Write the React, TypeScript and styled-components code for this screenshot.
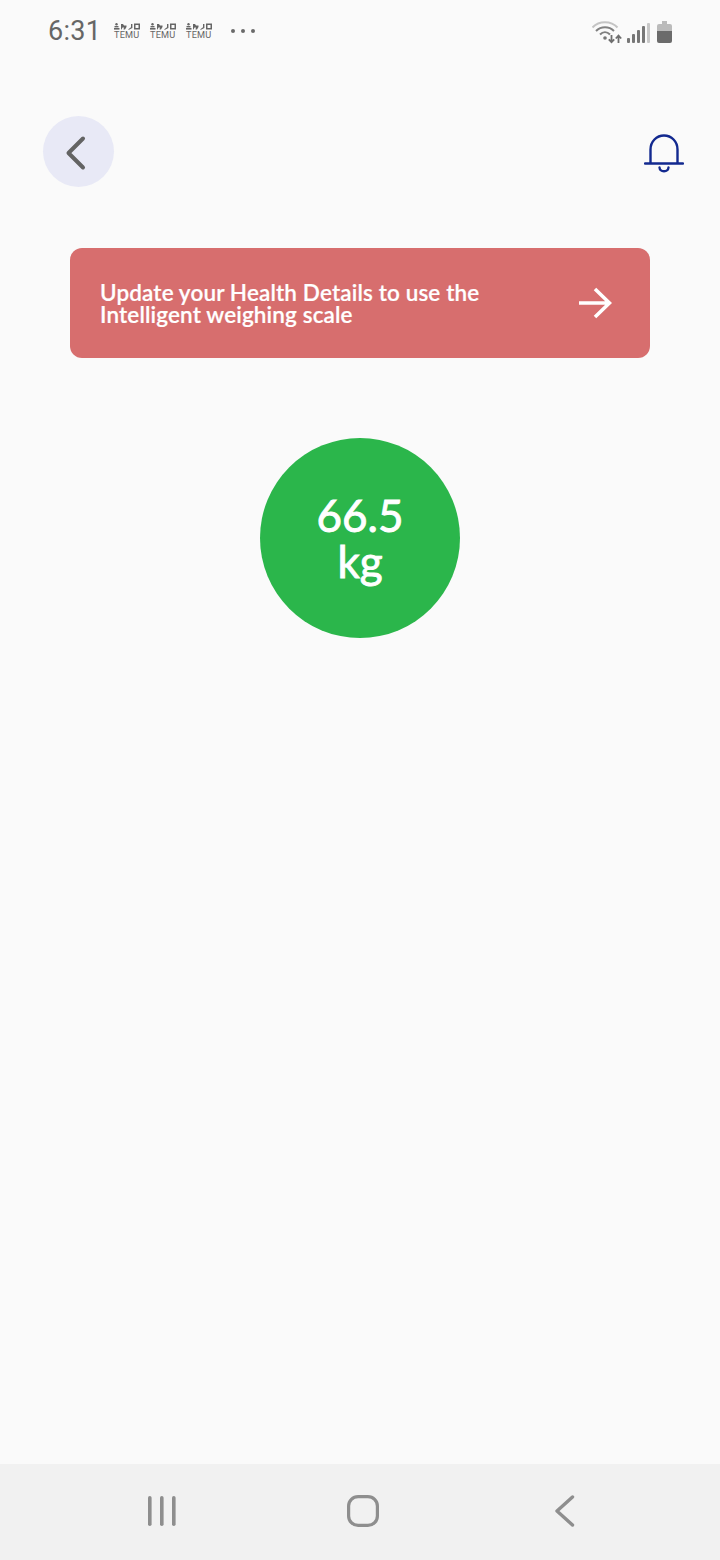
import React from "react";
import styled, { createGlobalStyle } from "styled-components";

const Global = createGlobalStyle`
  html, body { margin: 0; padding: 0; background: #fafafa; }
  #root { width: 720px; height: 1560px; }
`;

const Screen = styled.div`
  width: 720px;
  height: 1560px;
  display: flex;
  flex-direction: column;
  background: #fafafa;
  font-family: Lato, "Liberation Sans", sans-serif;
`;

const StatusBar = styled.div`
  height: 60px;
  padding: 2px 48px 0 48px;
  display: flex;
  align-items: center;
  justify-content: space-between;
  box-sizing: border-box;
`;

const StatusLeft = styled.div`
  display: flex;
  align-items: center;
`;

const Clock = styled.span`
  font-family: Roboto, sans-serif;
  font-size: 27px;
  color: #666;
  width: 66px;
  letter-spacing: 0.3px;
`;

const Temu = styled.div`
  width: 36px;
  display: flex;
  flex-direction: column;
  align-items: flex-start;
  color: #666;
  svg { display: block; margin-left: 0; }
`;

const TemuText = styled.span`
  font-family: Roboto, sans-serif;
  font-weight: 400;
  font-size: 9.2px;
  line-height: 9px;
  letter-spacing: 0.2px;
`;

const Dots = styled.div`
  margin-left: 9px;
  display: flex;
  gap: 6px;
`;

const Dot = styled.i`
  width: 4px;
  height: 4px;
  border-radius: 50%;
  background: #6a6a6a;
`;

const StatusRight = styled.div`
  display: flex;
  align-items: center;
  svg { display: block; }
`;

const Header = styled.div`
  margin-top: 56px;
  padding: 0 36px 0 43px;
  display: flex;
  align-items: center;
  justify-content: space-between;
`;

const BackButton = styled.div`
  width: 71px;
  height: 71px;
  border-radius: 50%;
  background: #e8e9f6;
  display: flex;
  align-items: center;
  justify-content: center;
  padding-right: 6px;
  box-sizing: border-box;
  svg { display: block; margin-top: 2px; }
`;

const BellIcon = styled.svg`
  display: block;
  margin-top: 4px;
`;

const Banner = styled.div`
  margin: 61px 70px 0;
  height: 110px;
  border-radius: 12px;
  background: #d76e6e;
  padding: 0 38px 0 30px;
  display: flex;
  align-items: center;
  justify-content: space-between;
`;

const BannerText = styled.div`
  color: #fff;
  font-size: 22.5px;
  font-weight: 600;
  line-height: 22px;
  padding-top: 2px;
  letter-spacing: 0.13px;
  -webkit-text-stroke: 0.2px #fff;
`;

const WeightCircle = styled.div`
  margin: 80px auto 0;
  width: 200px;
  height: 200px;
  border-radius: 50%;
  background: #2bb64b;
  color: #fff;
  font-size: 44px;
  font-weight: 400;
  line-height: 46px;
  -webkit-text-stroke: 0.9px #fff;
  display: flex;
  align-items: center;
  justify-content: center;
  text-align: center;
`;

const NavBar = styled.div`
  margin-top: auto;
  height: 96px;
  background: #f1f1f1;
  display: grid;
  grid-template-columns: repeat(3, 201.5px);
  justify-content: center;
  padding-left: 6px;
  box-sizing: border-box;
  align-items: center;
  justify-items: center;
  svg { display: block; margin-bottom: 2px; }
`;

const TemuIcon = () => (
  <Temu>
    <svg width="26" height="7" viewBox="0 0 26 7" fill="currentColor">
      <circle cx="2.5" cy="1.3" r="1.2" />
      <rect x="0.5" y="3" width="4" height="1.4" />
      <rect x="0" y="5" width="5.5" height="1.6" />
      <path d="M7 1h2l1 1.5h2.5v1.5L11 6.6H9.5L10 4.5H8.5L7.5 6.6H7z" />
      <path d="M14 6.5l3-2.2V1h1.4v4L15 6.8z" />
      <path fillRule="evenodd" d="M20 .5h6v6h-6zM21.5 2v3h3V2z" />
    </svg>
    <TemuText>TEMU</TemuText>
  </Temu>
);

export default function App() {
  return (
    <Screen>
      <Global />
      <StatusBar>
        <StatusLeft>
          <Clock>6:31</Clock>
          <TemuIcon />
          <TemuIcon />
          <TemuIcon />
          <Dots>
            <Dot />
            <Dot />
            <Dot />
          </Dots>
        </StatusLeft>
        <StatusRight>
          <svg width="80" height="26" viewBox="0 0 80 26" fill="none">
            <path d="M0.5 9.500C7 2.500 19 2.500 25.500 9.500" stroke="#c4c4c4" strokeWidth="2" />
            <path d="M4 13C9 8 17 8 22 13" stroke="#808080" strokeWidth="2" />
            <path d="M8 16.500C11 13.500 15 13.500 18 16.500" stroke="#808080" strokeWidth="2" />
            <circle cx="13" cy="20" r="1.800" fill="#777" />
            <path d="M19.500 17v7M16.800 21.300l2.700 2.900 2.700-2.900" stroke="#6e6e6e" strokeWidth="1.800" />
            <path d="M26.500 25v-7M23.800 20.500l2.700-2.900 2.700 2.900" stroke="#6e6e6e" strokeWidth="1.800" />
            <rect x="35" y="20" width="3" height="5" rx="1" fill="#777" />
            <rect x="40" y="16" width="3" height="9" rx="1" fill="#777" />
            <rect x="45" y="12" width="3" height="13" rx="1" fill="#777" />
            <rect x="50" y="8" width="3" height="17" rx="1" fill="#777" />
            <rect x="55" y="5" width="3" height="20" rx="1" fill="#c8c8c8" />
            <path d="M70 3h5v3h-5z" fill="#bbb" />
            <path d="M65 8a2 2 0 0 1 2-2h11a2 2 0 0 1 2 2v5H65z" fill="#bbb" />
            <path d="M65 13h15v10a2 2 0 0 1-2 2H67a2 2 0 0 1-2-2z" fill="#6b6b6b" />
          </svg>
        </StatusRight>
      </StatusBar>
      <Header>
        <BackButton>
          <svg width="24" height="36" viewBox="0 0 24 36" fill="none">
            <path d="M19 3.500L4.500 18 19 32.500" stroke="#636363" strokeWidth="4" strokeLinecap="round" strokeLinejoin="round" />
          </svg>
        </BackButton>
        <BellIcon width="40" height="44" viewBox="0 0 40 44" fill="none" stroke="#12298f" strokeWidth="2.400">
          <path d="M1 31.500h38" strokeLinecap="round" />
          <path d="M6.500 31V17.500C6.500 9.500 12.500 3.500 20 3.500S33.500 9.500 33.500 17.500V31" />
          <path d="M15.500 35.500c.5 5 8.500 5 9 0" strokeLinecap="round" />
        </BellIcon>
      </Header>
      <Banner>
        <BannerText>
          Update your Health Details to use the
          <br />
          Intelligent weighing scale
        </BannerText>
        <svg width="34" height="34" viewBox="0 0 34 34" fill="none" stroke="#fff" strokeWidth="3.600">
          <path d="M1 17h30M17 3l14.500 14L17 31" />
        </svg>
      </Banner>
      <WeightCircle>
        66.5
        <br />
        kg
      </WeightCircle>
      <NavBar>
        <svg width="32" height="32" viewBox="0 0 32 32" fill="#8e8e8e">
          <rect x="2" y="1" width="3.600" height="30" rx="1.800" />
          <rect x="14" y="1" width="3.600" height="30" rx="1.800" />
          <rect x="26" y="1" width="3.600" height="30" rx="1.800" />
        </svg>
        <svg width="32" height="32" viewBox="0 0 32 32" fill="none">
          <rect x="1.600" y="1.600" width="28.800" height="28.800" rx="9.500" stroke="#8e8e8e" strokeWidth="3.200" />
        </svg>
        <svg width="22" height="32" viewBox="0 0 22 32" fill="none">
          <path d="M18.500 2L3 16l15.500 14" stroke="#8e8e8e" strokeWidth="3.400" strokeLinecap="round" strokeLinejoin="round" />
        </svg>
      </NavBar>
    </Screen>
  );
}
